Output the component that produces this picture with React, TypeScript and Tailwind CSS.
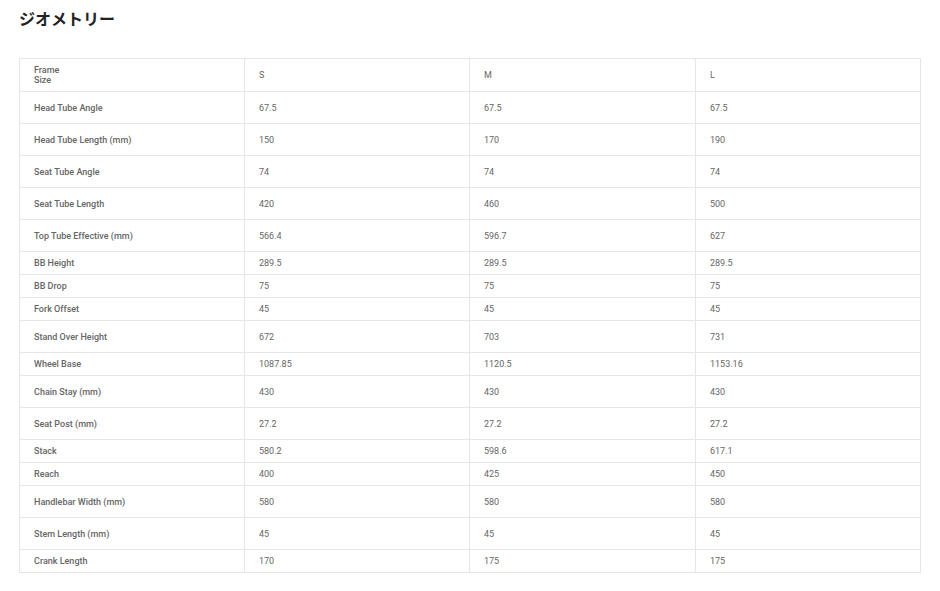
import React from 'react';

type Row = { label: React.ReactNode; s: string; m: string; l: string; tall: boolean };

const ROWS: Row[] = [
  { label: 'Head Tube Angle', s: '67.5', m: '67.5', l: '67.5', tall: true },
  { label: 'Head Tube Length (mm)', s: '150', m: '170', l: '190', tall: true },
  { label: 'Seat Tube Angle', s: '74', m: '74', l: '74', tall: true },
  { label: 'Seat Tube Length', s: '420', m: '460', l: '500', tall: true },
  { label: 'Top Tube Effective (mm)', s: '566.4', m: '596.7', l: '627', tall: true },
  { label: 'BB Height', s: '289.5', m: '289.5', l: '289.5', tall: false },
  { label: 'BB Drop', s: '75', m: '75', l: '75', tall: false },
  { label: 'Fork Offset', s: '45', m: '45', l: '45', tall: false },
  { label: 'Stand Over Height', s: '672', m: '703', l: '731', tall: true },
  { label: 'Wheel Base', s: '1087.85', m: '1120.5', l: '1153.16', tall: false },
  { label: 'Chain Stay (mm)', s: '430', m: '430', l: '430', tall: true },
  { label: 'Seat Post (mm)', s: '27.2', m: '27.2', l: '27.2', tall: true },
  { label: 'Stack', s: '580.2', m: '598.6', l: '617.1', tall: false },
  { label: 'Reach', s: '400', m: '425', l: '450', tall: false },
  { label: 'Handlebar Width (mm)', s: '580', m: '580', l: '580', tall: true },
  { label: 'Stem Length (mm)', s: '45', m: '45', l: '45', tall: true },
  { label: 'Crank Length', s: '170', m: '175', l: '175', tall: false },
];

const cell = 'border border-[#e6e6e6] pl-[14px] pr-2 align-middle text-left';

export default function App() {
  return (
    <div className="min-h-[591px] bg-white px-[19px] pt-[6px] font-['Roboto','Noto_Sans_CJK_JP',sans-serif] text-[#666]">
      {/* Title */}
      <h2 className="h-[24px] text-[16px] font-bold leading-[24px] text-[#222] font-['Noto_Sans_CJK_JP','Roboto',sans-serif]">
        ジオメトリー
      </h2>

      <table className="mt-[28px] w-[901px] table-fixed border-collapse text-[9px] leading-[10px]">
        <colgroup>
          <col className="w-[225px]" />
          <col className="w-[225px]" />
          <col className="w-[226px]" />
          <col className="w-[225px]" />
        </colgroup>
        <thead>
          <tr className="h-[33px]">
            <th className={`${cell} font-medium`}>
              Frame
              <br />
              Size
            </th>
            <th className={`${cell} font-normal`}>S</th>
            <th className={`${cell} font-normal`}>M</th>
            <th className={`${cell} font-normal`}>L</th>
          </tr>
        </thead>
        <tbody>
          {ROWS.map((row, i) => (
            <tr key={i} className={row.tall ? 'h-[32px]' : 'h-[23px]'}>
              <td className={`${cell} font-medium`}>{row.label}</td>
              <td className={cell}>{row.s}</td>
              <td className={cell}>{row.m}</td>
              <td className={cell}>{row.l}</td>
            </tr>
          ))}
        </tbody>
      </table>
    </div>
  );
}
